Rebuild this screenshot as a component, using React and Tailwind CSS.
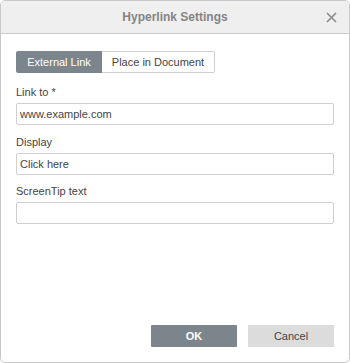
import React from "react";

const Field = ({ label, value, className = "" }) => (
  <div className={className}>
    <div className="h-[20px] leading-[20px] text-[11px] text-[#444]">{label}</div>
    <div className="mt-[1px] h-[22px] border border-[#cfcfcf] rounded-[2px] px-[3px] leading-[20px] text-[11px] text-[#444]">
      {value}
    </div>
  </div>
);

const App = () => {
  return (
    <div
      className="w-[350px] h-[363px] bg-white border border-[#c8c8c8] rounded-[5px] overflow-hidden flex flex-col"
      style={{ fontFamily: '"Liberation Sans", Arial, sans-serif' }}
    >
      <div className="h-[33px] shrink-0 bg-[#efefef] border-b border-[#cbcbcb] relative flex items-center justify-center">
        <span className="text-[12px] font-bold text-[#848484]">Hyperlink Settings</span>
        <svg className="absolute right-[12px] top-[11px]" width="11" height="11" viewBox="0 0 11 11">
          <path d="M1 1L10 10M10 1L1 10" stroke="#8a8a8a" strokeWidth="1.6" />
        </svg>
      </div>

      <div className="flex-1 flex flex-col px-[15px] pt-[17px]">
        <div className="flex h-[22px] text-[11px]">
          <div className="w-[86px] bg-[#7d858c] text-white flex items-center justify-center rounded-l-[2px]">
            External Link
          </div>
          <div className="w-[113px] border border-[#cfcfcf] border-l-0 text-[#444] flex items-center justify-center rounded-r-[2px]">
            Place in Document
          </div>
        </div>

        <Field label="Link to *" value="www.example.com" className="mt-[9px]" />
        <Field label="Display" value="Click here" className="mt-[7px]" />
        <Field label="ScreenTip text" value="" className="mt-[6px]" />

        <div className="mt-auto mb-[15px] flex justify-end gap-[11px]">
          <div className="w-[86px] h-[22px] bg-[#7d858c] text-white text-[11px] font-bold flex items-center justify-center rounded-[1px]">
            OK
          </div>
          <div className="w-[86px] h-[22px] bg-[#dcdcdc] text-[#444] text-[11px] flex items-center justify-center rounded-[1px]">
            Cancel
          </div>
        </div>
      </div>
    </div>
  );
};

export default App;
